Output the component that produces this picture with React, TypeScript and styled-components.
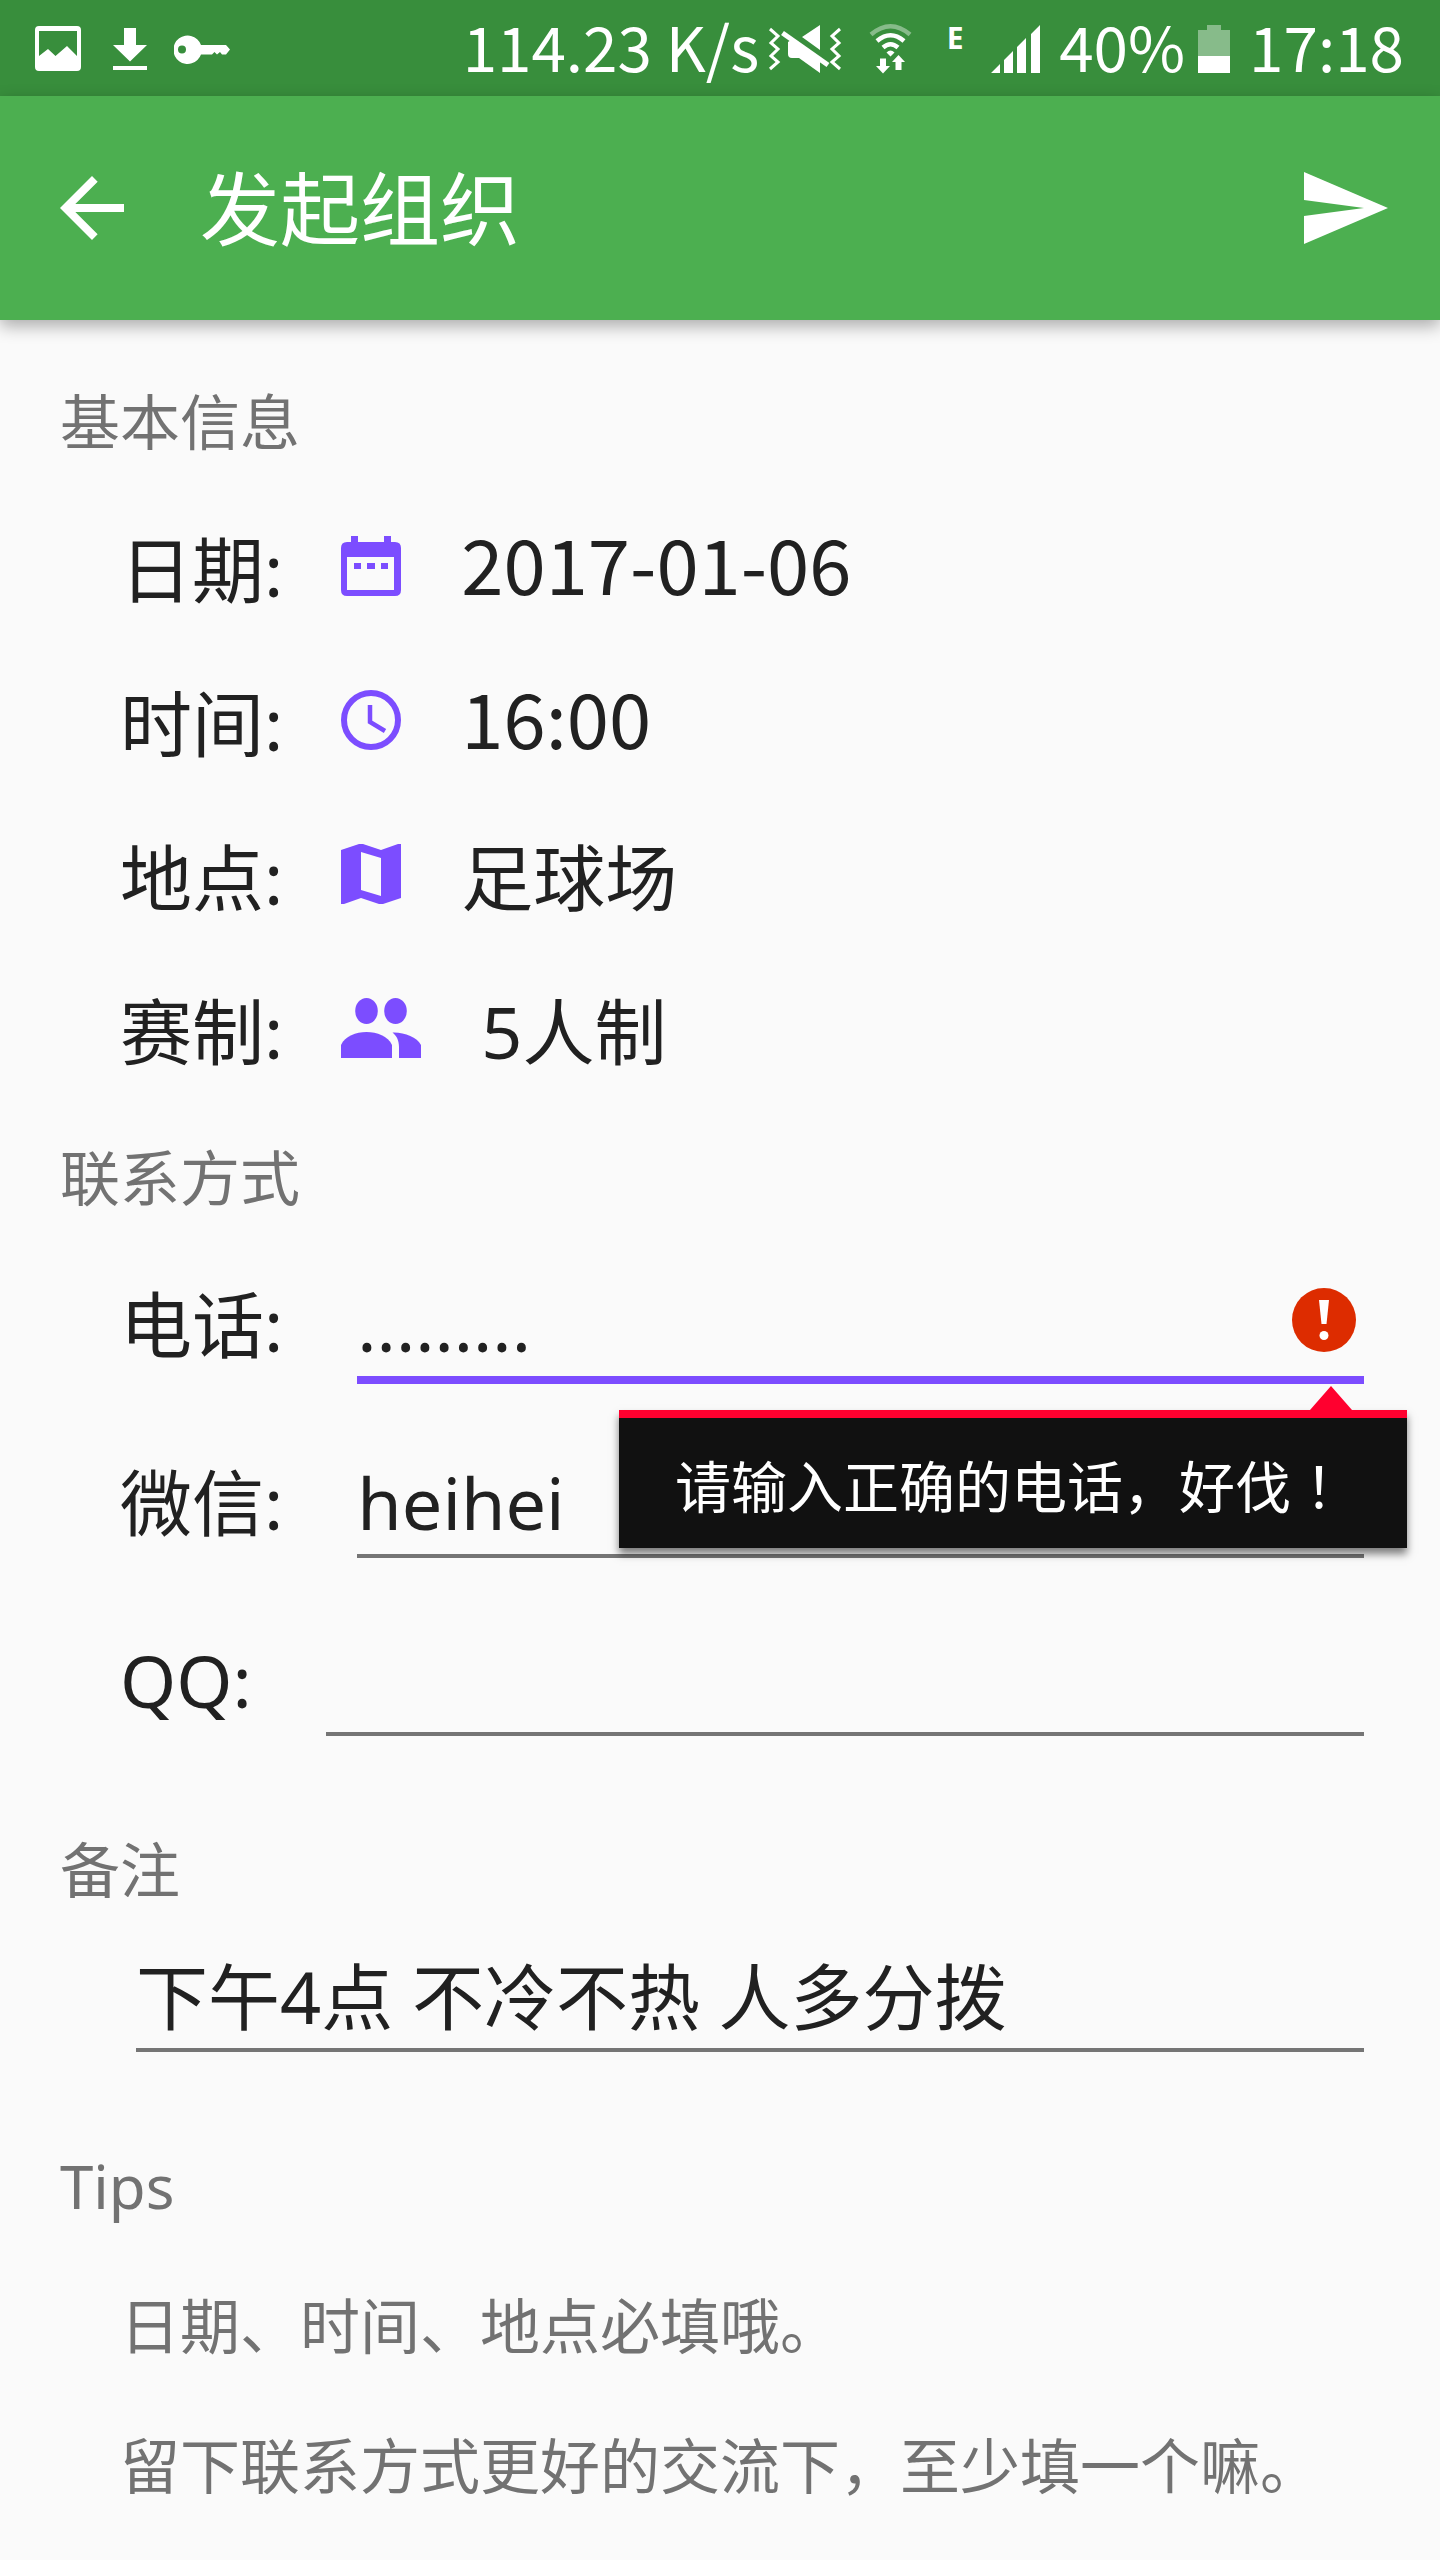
import React, { useState } from 'react';
import styled, { createGlobalStyle } from 'styled-components';

const color = {
  primary: '#4caf50',
  primaryDark: '#388e3c',
  accent: '#7c4dff',
  text: '#212121',
  secondary: '#727272',
  background: '#fafafa',
  error: '#dd2c00',
  popup: '#111111',
  popupEdge: '#ff002f',
};

const numeric = '"Noto Sans CJK SC", "Noto Sans", sans-serif';

const GlobalStyle = createGlobalStyle`
  * { box-sizing: border-box; }
  body {
    margin: 0;
    background: ${color.background};
    color: ${color.text};
    font-family: "Noto Sans", "Noto Sans CJK SC", sans-serif;
  }
  svg { display: block; flex: none; }
  button, input { font: inherit; color: inherit; border: 0; padding: 0; background: none; border-radius: 0; }
  button { cursor: pointer; }
  input:focus, button:focus { outline: none; }
`;

const StatusBar = styled.div`
  display: flex;
  justify-content: space-between;
  align-items: center;
  height: 96px;
  padding: 0 36px 0 32px;
  background: ${color.primaryDark};
  color: #fff;
`;

const StatusGroup = styled.div<{ $gap: number }>`
  display: flex;
  align-items: center;
  gap: ${p => p.$gap}px;
`;

const StatusText = styled.span`
  padding-bottom: 6px;
  font-family: ${numeric};
  font-size: 62px;
  line-height: 90px;
  white-space: nowrap;
`;

const NetworkType = styled.span`
  width: 40px;
  padding-bottom: 20px;
  font: bold 30px/32px "Noto Sans", sans-serif;
  text-align: center;
`;

const AppBar = styled.header`
  display: flex;
  align-items: center;
  height: 224px;
  padding: 0 48px 0 44px;
  background: ${color.primary};
  color: #fff;
  box-shadow: 0 6px 16px rgba(0, 0, 0, 0.32);
`;

const Title = styled.h1`
  flex: 1;
  margin: 0 0 0 60px;
  font-size: 80px;
  font-weight: 400;
  line-height: 112px;
`;

const Form = styled.form`
  display: flex;
  flex-direction: column;
  gap: 28px;
  padding: 60px 76px 24px 60px;
`;

const Section = styled.section<{ $gap?: number; $tail?: number }>`
  display: flex;
  flex-direction: column;
  gap: ${p => p.$gap ?? 28}px;
  padding-bottom: ${p => p.$tail ?? 0}px;
`;

const SectionTitle = styled.h2`
  margin: 0;
  color: ${color.secondary};
  font-size: 60px;
  font-weight: 400;
  line-height: 84px;
`;

const Rows = styled.div`
  padding-left: 60px;
`;

const InfoRow = styled.div`
  display: flex;
  align-items: center;
  gap: 58px;
  height: 154px;
  font-size: 72px;
  line-height: 104px;
`;

const Picker = styled.button`
  display: flex;
  align-items: center;
  gap: 60px;
  color: ${color.text};

  svg {
    margin-bottom: 6px;
    color: ${color.accent};
  }
`;

const PickerValue = styled.span<{ $numeric: boolean }>`
  padding-bottom: ${p => (p.$numeric ? 14 : 0)}px;
  font-family: ${p => (p.$numeric ? numeric : 'inherit')};
  font-size: ${p => (p.$numeric ? 76 : 72)}px;
  line-height: 104px;
`;

const FieldRow = styled.div`
  display: flex;
  align-items: flex-start;
  gap: 74px;
  height: 178px;
  padding-top: 24px;
  font-size: 72px;
  line-height: 104px;
`;

const Field = styled.div<{ $active?: boolean; $inset?: number }>`
  position: relative;
  display: flex;
  flex: 1;
  align-items: flex-start;
  min-width: 0;
  margin-left: ${p => p.$inset ?? 0}px;
  padding-right: 8px;
  border-bottom: ${p => (p.$active ? `8px solid ${color.accent}` : '4px solid #757575')};

  > svg { margin-top: 16px; }
`;

const Input = styled.input`
  flex: 1;
  min-width: 0;
  height: 104px;
  font-size: 72px;
`;

const ErrorPopup = styled.div`
  position: absolute;
  z-index: 1;
  top: calc(100% + 34px);
  right: -43px;
  padding: 30px 60px 24px 56px;
  border-top: 8px solid ${color.popupEdge};
  background: ${color.popup};
  color: #fff;
  font-size: 56px;
  line-height: 76px;
  white-space: nowrap;
  box-shadow: 0 6px 8px rgba(0, 0, 0, 0.5);

  &::before {
    content: "";
    position: absolute;
    right: 55px;
    bottom: 100%;
    margin-bottom: 8px;
    border: solid transparent;
    border-width: 0 21px 24px;
    border-bottom-color: ${color.popupEdge};
  }
`;

const CenteredMark = styled.span`
  font-family: "Noto Sans", "Noto Sans CJK JP", sans-serif;
`;

const Tip = styled.p`
  margin: 0;
  color: ${color.secondary};
  font-size: 60px;
  line-height: 140px;
`;

const ImageIcon = () => (
  <svg width="52" height="96" viewBox="32 0 52 96" fill="currentColor">
    <path fillRule="evenodd" d="M39 26H77Q81 26 81 30V67Q81 71 77 71H39Q35 71 35 67V30Q35 26 39 26ZM39 31V56L48 49L55.500 56L67 46L77 56V31Z" />
  </svg>
);

const DownloadIcon = () => (
  <svg width="38" height="96" viewBox="110 0 38 96" fill="currentColor">
    <path d="M124 28H136V45H147L130 61.500L113 45H124ZM113 66H147V70H113Z" />
  </svg>
);

const KeyIcon = () => (
  <svg width="56" height="96" viewBox="174 0 56 96" fill="currentColor">
    <path fillRule="evenodd" d="M201 45H226L230 49.500L226 54.500H222L220 52L217 54.500L214.500 52L212 54.500H201A14.200 14.200 0 1 1 201 45ZM182 45.500A4 4 0 1 0 182 53.500A4 4 0 1 0 182 45.500Z" />
  </svg>
);

const MutedVibrateIcon = () => (
  <svg width="80" height="96" viewBox="0 0 80 96" fill="currentColor">
    <g fill="none" stroke="currentColor" strokeWidth="3">
      <path d="M3 29L11 36L4 43L11 49L4 56L11 62L3 69" />
      <path d="M73 29L65 36L72 43L65 49L72 56L65 62L73 69" />
    </g>
    <path d="M15.500 33L61 65" stroke="currentColor" strokeWidth="5" />
    <path d="M35 37L53 25V50ZM24 40L53 61V73L32 58H25Q21 58 21 54V42Z" />
  </svg>
);

const WifiIcon = () => (
  <svg width="72" height="96" viewBox="0 0 72 96" fill="currentColor">
    <g fill="none" stroke="currentColor" strokeWidth="4.500">
      <path d="M16 34.500Q35.500 18 55 34.500" opacity="0.4" />
      <path d="M22 41Q35.500 29.500 49 41" />
      <path d="M28 47.500Q35.500 41 43 47.500" />
    </g>
    <path d="M31.500 52.500Q35.500 48.500 39.500 52.500L35.500 56.500Z" />
    <path d="M25 58.500H31V66H35L28 73.500L21 66H25Z" />
    <path d="M43.500 55L50 62H46.500V70H40.500V62H37Z" />
  </svg>
);

const SignalIcon = () => (
  <svg width="68" height="96" viewBox="0 0 68 96" fill="currentColor">
    <path d="M8 73L17 64V73ZM21 73V60L30 51V73ZM34 73V47L43 38V73ZM48 73V34L57 25V73Z" />
  </svg>
);

const BatteryIcon = () => (
  <svg width="48" height="96" viewBox="0 0 48 96" fill="currentColor">
    <path d="M5 30H14V25H28V30H37V56H5Z" opacity="0.4" />
    <path d="M5 56H37V73H5Z" />
  </svg>
);

const BackIcon = () => (
  <svg width="96" height="96" viewBox="0 0 24 24" fill="currentColor">
    <path d="M20 11H7.830l5.590-5.590L12 4l-8 8 8 8 1.410-1.410L7.830 13H20v-2z" />
  </svg>
);

const SendIcon = () => (
  <svg width="96" height="96" viewBox="0 0 24 24" fill="currentColor">
    <path d="M2 3L23 12L2 21V14L17 12L2 10Z" />
  </svg>
);

const CalendarIcon = () => (
  <svg width="60" height="60" viewBox="0 0 60 60" fill="currentColor">
    <path fillRule="evenodd" d="M10 0H17V6H43V0H50V6H54Q60 6 60 12V54Q60 60 54 60H6Q0 60 0 54V12Q0 6 6 6H10ZM6 21V54H53V21Z" />
    <path d="M13 27H20V33H13ZM26 27H34V33H26ZM40 27H47V33H40Z" />
  </svg>
);

const ClockIcon = () => (
  <svg width="60" height="60" viewBox="0 0 60 60" fill="none" stroke="currentColor">
    <circle cx="30" cy="30" r="27" strokeWidth="6" />
    <path d="M29 15V32L44 41" strokeWidth="4.500" />
  </svg>
);

const MapIcon = () => (
  <svg width="60" height="60" viewBox="0 0 60 60" fill="currentColor">
    <path fillRule="evenodd" d="M0 6L18 0H22L40 6L57 0H60V54L42 60H38L20 54L3 60H0ZM20 8V46L40 52V14Z" />
  </svg>
);

const PeopleIcon = () => (
  <svg width="80" height="60" viewBox="0 0 80 60" fill="currentColor">
    <ellipse cx="25.500" cy="13" rx="11.300" ry="13" />
    <ellipse cx="54.500" cy="13" rx="11.300" ry="13" />
    <path d="M0 60V47C4 38 15 34 25.500 34S47 38 51 47V60Z" />
    <path d="M51.500 34.500C63 34 76 39 80 47V60H58V49C58 43 56 38 51.500 34.500Z" />
  </svg>
);

const ErrorIcon = () => (
  <svg width="64" height="64" viewBox="0 0 64 64" role="img" aria-label="错误">
    <circle cx="32" cy="32" r="32" fill={color.error} />
    <path d="M27 12H37L34.500 36H29.500Z" fill="#fff" />
    <circle cx="32" cy="47.500" r="4.500" fill="#fff" />
  </svg>
);

const infoItems = [
  { id: 'date', label: '日期:', value: '2017-01-06', Icon: CalendarIcon, isNumeric: true },
  { id: 'time', label: '时间:', value: '16:00', Icon: ClockIcon, isNumeric: true },
  { id: 'place', label: '地点:', value: '足球场', Icon: MapIcon, isNumeric: false },
  { id: 'format', label: '赛制:', value: '5人制', Icon: PeopleIcon, isNumeric: false },
];

export default function App() {
  const [phone, setPhone] = useState('.........');
  const [wechat, setWechat] = useState('heihei');
  const [qq, setQq] = useState('');
  const [note, setNote] = useState('下午4点 不冷不热 人多分拨');
  const phoneInvalid = !/^\d{7,}$/.test(phone);

  return (
    <>
      <GlobalStyle />
      <StatusBar>
        <StatusGroup $gap={26}>
          <ImageIcon />
          <DownloadIcon />
          <KeyIcon />
        </StatusGroup>
        <StatusGroup $gap={8}>
          <StatusText>114.23 K/s</StatusText>
          <MutedVibrateIcon />
          <WifiIcon />
          <NetworkType>E</NetworkType>
          <SignalIcon />
          <StatusText>40%</StatusText>
          <BatteryIcon />
          <StatusText>17:18</StatusText>
        </StatusGroup>
      </StatusBar>
      <AppBar>
        <button type="button" aria-label="返回"><BackIcon /></button>
        <Title>发起组织</Title>
        <button type="submit" form="organize" aria-label="发送"><SendIcon /></button>
      </AppBar>
      <Form id="organize" onSubmit={e => e.preventDefault()}>
        <Section>
          <SectionTitle>基本信息</SectionTitle>
          <Rows>
            {infoItems.map(({ id, label, value, Icon, isNumeric }) => (
              <InfoRow key={id}>
                <label htmlFor={id}>{label}</label>
                <Picker id={id} type="button">
                  <Icon />
                  <PickerValue $numeric={isNumeric}>{value}</PickerValue>
                </Picker>
              </InfoRow>
            ))}
          </Rows>
        </Section>
        <Section $tail={18}>
          <SectionTitle>联系方式</SectionTitle>
          <Rows>
            <FieldRow>
              <label htmlFor="phone">电话:</label>
              <Field $active>
                <Input id="phone" type="tel" value={phone} aria-invalid={phoneInvalid} onChange={e => setPhone(e.target.value)} />
                {phoneInvalid && <ErrorIcon />}
                {phoneInvalid && (
                  <ErrorPopup role="alert">
                    请输入正确的电话，好伐<CenteredMark>！</CenteredMark>
                  </ErrorPopup>
                )}
              </Field>
            </FieldRow>
            <FieldRow>
              <label htmlFor="wechat">微信:</label>
              <Field>
                <Input id="wechat" value={wechat} onChange={e => setWechat(e.target.value)} />
              </Field>
            </FieldRow>
            <FieldRow>
              <label htmlFor="qq">QQ:</label>
              <Field>
                <Input id="qq" value={qq} onChange={e => setQq(e.target.value)} />
              </Field>
            </FieldRow>
          </Rows>
        </Section>
        <Section $gap={8} $tail={18}>
          <SectionTitle as="label" htmlFor="note">备注</SectionTitle>
          <Rows>
            <FieldRow>
              <Field $inset={16}>
                <Input id="note" value={note} onChange={e => setNote(e.target.value)} />
              </Field>
            </FieldRow>
          </Rows>
        </Section>
        <Section>
          <SectionTitle>Tips</SectionTitle>
          <Rows>
            <Tip>日期、时间、地点必填哦。</Tip>
            <Tip>留下联系方式更好的交流下，至少填一个嘛。</Tip>
          </Rows>
        </Section>
      </Form>
    </>
  );
}
